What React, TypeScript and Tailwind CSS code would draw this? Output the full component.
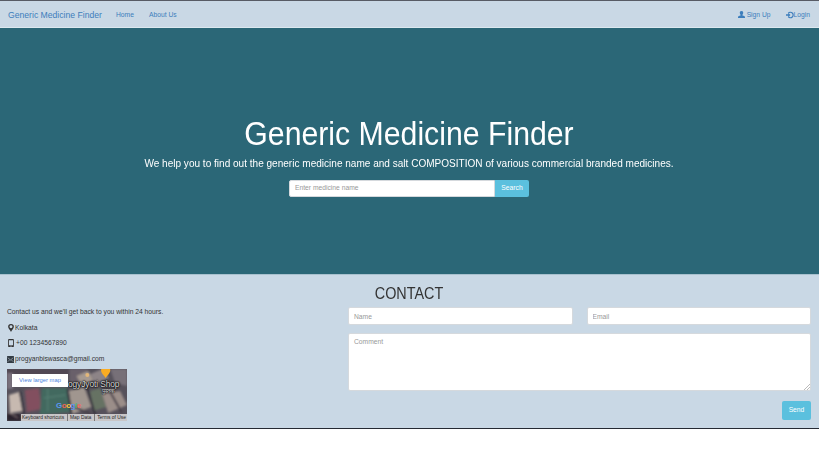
import React from "react";

const UserIcon = () => (
  <svg viewBox="0 0 14 14" className="h-[7px] w-[7px] shrink-0" fill="currentColor">
    <path d="M7 0C4.300 0 3.400 1.800 3.600 4c.1 1.500.7 2.700 1.500 3.500v1.700C2.500 10 0 10.400 0 12.300V14h14v-1.700c0-1.900-2.500-2.300-5.100-3.100V7.500c.8-.8 1.400-2 1.500-3.500.2-2.200-.7-4-3.400-4z" />
  </svg>
);

const LoginIcon = () => (
  <svg viewBox="0 0 16 14" className="h-[8px] w-[8px] shrink-0" fill="none">
    <path d="M4.500 3.600A5.500 5.500 0 1 1 4.500 10.400" stroke="currentColor" strokeWidth="2.400" />
    <path d="M0 5.400h4.500V2.800L9 7l-4.500 4.200V8.600H0z" fill="currentColor" />
  </svg>
);

const PinIcon = () => (
  <svg viewBox="0 0 10 14" className="h-[8px] w-[6px] shrink-0" fill="currentColor">
    <path fillRule="evenodd" d="M5 0a5 5 0 0 0-5 5c0 3 3.500 5.500 5 9 1.500-3.500 5-6 5-9a5 5 0 0 0-5-5zm0 2.300a2.600 2.600 0 1 1 0 5.200 2.600 2.600 0 0 1 0-5.200z" />
  </svg>
);

const PhoneIcon = () => (
  <svg viewBox="0 0 10 14" className="h-[8px] w-[6px] shrink-0" fill="currentColor">
    <path fillRule="evenodd" d="M1.500 0h7A1.500 1.500 0 0 1 10 1.500v11A1.500 1.500 0 0 1 8.500 14h-7A1.500 1.500 0 0 1 0 12.500v-11A1.500 1.500 0 0 1 1.500 0zM1.500 2v8.800h7V2zM4 11.600v1.400h2v-1.400z" />
  </svg>
);

const MailIcon = () => (
  <svg viewBox="0 0 14 14" className="h-[7px] w-[7px] shrink-0">
    <rect width="14" height="14" rx="1" fill="#333c44" />
    <path d="M1.500 3.500 7 8l5.500-4.500M1.500 11.500l4-4M12.500 11.500l-4-4" stroke="#b8c5d0" strokeWidth="1.200" fill="none" />
  </svg>
);

function MapArt() {
  return (
    <svg viewBox="0 0 121 52" className="block h-full w-full" preserveAspectRatio="none">
      <defs>
        <filter id="soften" x="-5%" y="-5%" width="110%" height="110%">
          <feGaussianBlur stdDeviation="0.9" />
        </filter>
      </defs>
      <rect width="121" height="52" fill="#56515b" />
      <g filter="url(#soften)">
        <path d="M0 0h62v6H0z" fill="#514652" />
        <path d="M0 4h6v16H0z" fill="#79707b" />
        <path d="M2 26l10-3 4 19-13 2z" fill="#c7b9b0" />
        <path d="M18 21l14-2 3 21-15 3z" fill="#82505f" />
        <path d="M35 19h26l3 24-31 3z" fill="#42695f" />
        <path d="M37 29l22-3M41 20v22" stroke="#527a70" strokeWidth="1.500" />
        <path d="M62 22l16-4 7 20-19 7z" fill="#a0968f" />
        <path d="M63 0h18l-3 12-15 4z" fill="#69616a" />
        <path d="M70 7l12-5 5 9-11 6z" fill="#a69a91" />
        <path d="M84 5l12-5 7 9-14 6z" fill="#8d8487" />
        <path d="M104 0h17v17l-12-3z" fill="#777078" />
        <path d="M84 22l10-3 6 19-13 4z" fill="#667263" />
        <path d="M96 25l18-3 7 14-19 8z" fill="#9b8e89" />
        <path d="M80 17l9 29M61 20l4 25M13 22l4 23" stroke="#332f3a" strokeWidth="2" />
        <path d="M100 16l16 28M65 37l20 8" stroke="#484048" strokeWidth="2" />
        <path d="M0 45h14v7H0z" fill="#29242e" />
        <path d="M3 44l8 5" stroke="#89777a" />
      </g>
      <circle cx="81" cy="6" r="2" fill="#e3b779" />
      <path d="M95 0h9c1 4-3 6-4.500 9C98 6 94 4 95 0z" fill="#fbac22" />
    </svg>
  );
}

function LocationMap() {
  return (
    <div className="relative h-[52px] w-[120px] overflow-hidden">
      <MapArt />
      <span className="absolute left-[61px] top-[9px] whitespace-nowrap text-[8.400px] leading-[12px] tracking-[-0.1px] text-[#d8d6d6] [text-shadow:0_0_1px_#000,0_0_2px_#000,0_0_2px_#000]">
        ogyJyoti Shop
      </span>
      <span className="absolute left-[95px] top-[19px] text-[6px] leading-[7px] text-[#d5d2d2] [text-shadow:0_0_1px_#000,0_0_1px_#000]">
        पुस्तक
      </span>
      <a className="absolute left-[5px] top-[5px] flex h-[13px] w-[56px] items-center justify-center whitespace-nowrap bg-white text-[5.800px] text-[#4a7fe0]">
        View larger map
      </a>
      <span className="absolute left-[49px] top-[32px] whitespace-nowrap text-[8px] font-bold leading-[10px] tracking-[-0.500px]">
        <span className="text-[#5b98f4]">G</span>
        <span className="text-[#ee6358]">o</span>
        <span className="text-[#f8c33c]">o</span>
        <span className="text-[#5b98f4]">g</span>
        <span className="text-[#58b871]">l</span>
        <span className="text-[#ee6358]">e</span>
      </span>
      <div className="absolute bottom-0 left-[14px] right-0 flex h-[7px] items-center justify-between whitespace-nowrap bg-[#c8c6c8] px-px text-[4.900px] text-[#222]">
        <span>Keyboard shortcuts</span>
        <span className="h-full w-px bg-[#777]" />
        <span>Map Data</span>
        <span className="h-full w-px bg-[#777]" />
        <span>Terms of Use</span>
      </div>
    </div>
  );
}

const inputStyle =
  "block min-w-0 rounded-[2px] border border-[#d5d9dd] bg-white px-[5px] text-[6.720px] text-[#555] outline-none placeholder:text-[#999] placeholder:opacity-100";

export default function App() {
  return (
    <div className="h-[460px] w-[819px] overflow-hidden bg-white font-['Liberation_Sans',Arial,sans-serif] text-[6.720px] text-[#333]">
      <nav className="flex h-[28px] items-center border-b border-t border-b-[#dce8ef] border-t-[#575b65] bg-[#c9d8e5] pl-[8px] pr-[9px] pt-[2px] text-[#3d7ebc]">
        <a className="w-[108px] whitespace-nowrap text-[8.640px]">Generic Medicine Finder</a>
        <a className="w-[33px]">Home</a>
        <a>About Us</a>
        <div className="ml-auto flex items-center gap-[15px]">
          <a className="flex items-center gap-[2px]">
            <UserIcon />
            Sign Up
          </a>
          <a className="flex items-center">
            <LoginIcon />
            Login
          </a>
        </div>
      </nav>

      <header className="flex h-[246px] flex-col items-center bg-[#2b6777] pr-[1px] pt-[88px] text-white">
        <h1 className="scale-y-110 whitespace-nowrap text-[30.240px] leading-[35px]">Generic Medicine Finder</h1>
        <p className="mt-[6px] scale-y-110 whitespace-nowrap text-[10.050px] leading-[14px]">
          We help you to find out the generic medicine name and salt COMPOSITION of various commercial branded medicines.
        </p>
        <form className="mt-[9px] flex h-[17px] w-[240px]">
          <input className="min-w-0 flex-1 rounded-l-[2px] border border-[#d5d9dd] bg-white px-[5px] text-[6.720px] text-[#555] outline-none placeholder:text-[#999] placeholder:opacity-100" placeholder="Enter medicine name" />
          <button type="button" className="w-[34px] rounded-r-[2px] bg-[#5bc0de] text-[6.720px] text-white">
            Search
          </button>
        </form>
      </header>

      <footer className="h-[155px] border-b border-t border-b-[#252a33] border-t-[#a8c1ce] bg-[#c9d8e5] pl-[7px] pr-[8px] pt-[9px]">
        <h2 className="h-[23px] text-center text-[14.400px] leading-[18px]">
          <span className="inline-block scale-y-110">CONTACT</span>
        </h2>
        <div className="flex">
          <div className="w-[341px]">
            <p className="h-[16px] leading-[10px]">Contact us and we'll get back to you within 24 hours.</p>
            <p className="flex h-[15px] items-start gap-[1px] pl-px leading-[10px]">
              <span className="flex h-[10px] items-center"><PinIcon /></span>
              Kolkata
            </p>
            <p className="flex h-[16px] items-start gap-[2px] pl-px leading-[10px]">
              <span className="flex h-[10px] items-center"><PhoneIcon /></span>
              +00 1234567890
            </p>
            <p className="flex h-[15px] items-start gap-[1px] leading-[10px]">
              <span className="flex h-[10px] items-center"><MailIcon /></span>
              progyanbiswasca@gmail.com
            </p>
            <LocationMap />
          </div>
          <form className="flex w-[463px] flex-col">
            <div className="flex gap-[14px]">
              <input className={`${inputStyle} h-[18px] flex-1`} placeholder="Name" />
              <input className={`${inputStyle} h-[18px] flex-1`} placeholder="Email" />
            </div>
            <div className="relative mt-[8px]">
              <textarea className={`${inputStyle} h-[58px] w-full resize-none pt-[3px] leading-[10px]`} placeholder="Comment" />
              <svg viewBox="0 0 6 6" className="absolute bottom-[1px] right-[1px] h-[6px] w-[6px]">
                <path d="M0 6 6 0M3 6l3-3" stroke="#bbb" />
              </svg>
            </div>
            <button type="button" className="mt-[10px] h-[19px] w-[29px] self-end rounded-[2px] bg-[#5bc0de] text-[6.720px] text-white">
              Send
            </button>
          </form>
        </div>
      </footer>
    </div>
  );
}
